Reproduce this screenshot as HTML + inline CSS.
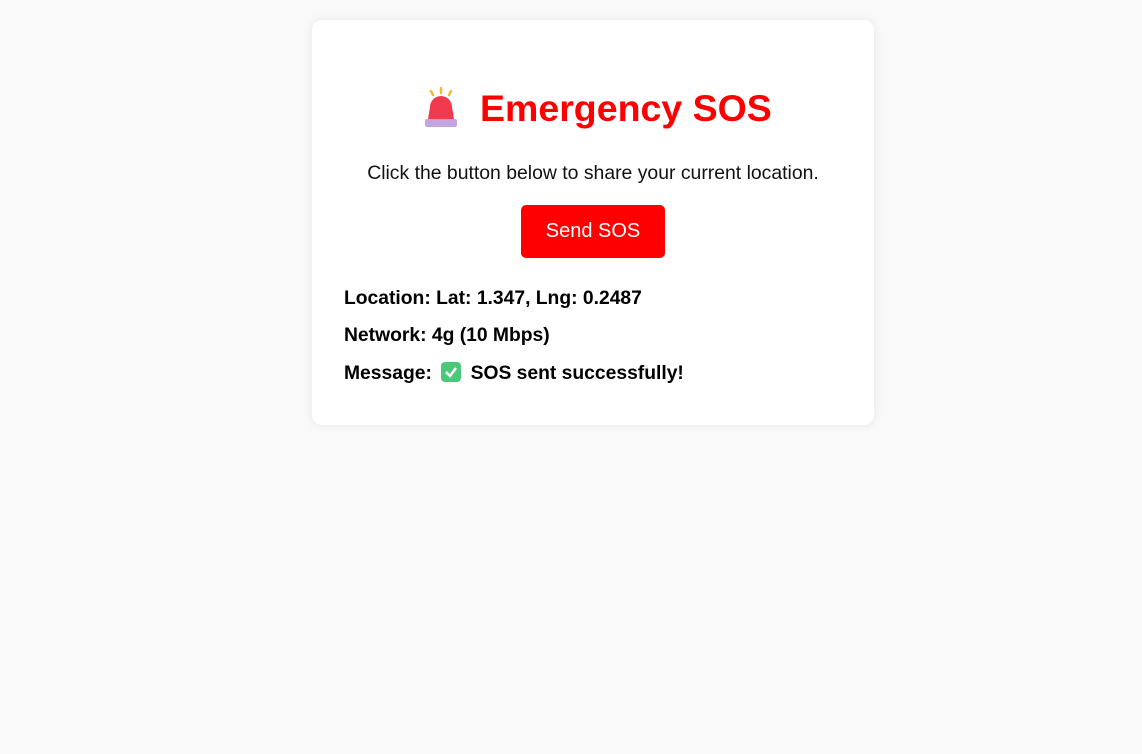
<!DOCTYPE html>
<html><head><meta charset="utf-8"><style>
body{margin:0;background:#f9f9f9;font-family:"Liberation Sans",sans-serif;width:1142px;height:754px;position:relative;overflow:hidden}
.card{position:absolute;left:312px;top:20px;width:562px;height:405px;background:#fff;border-radius:10px;box-shadow:0 0 10px rgba(0,0,0,0.08)}
.t{position:absolute;left:0;width:100%;text-align:center}
h1{position:absolute;left:168px;top:67px;margin:0;font-size:37.5px;color:#ff0000;font-weight:bold;white-space:nowrap}
.sub{top:142px;font-size:19.4px;color:#111}
.btn{position:absolute;left:209px;top:185px;width:144px;height:53px;background:#ff0000;border-radius:5px;color:#fff;font-size:20px;line-height:53px;text-align:center}
.l{position:absolute;left:32px;font-size:19.3px;font-weight:bold;color:#000;white-space:nowrap}
</style></head><body>
<div class="card">
<svg style="position:absolute;left:111px;top:67px" width="36" height="41" viewBox="0 0 36 41">
<g stroke="#f5b82e" stroke-width="2.5" stroke-linecap="round"><line x1="18" y1="1" x2="18" y2="6"/><line x1="8" y1="4" x2="10" y2="8"/><line x1="28" y1="4" x2="26" y2="8"/></g>
<path d="M5 32 L7 20 a11 11 0 0 1 22 0 L31 32 Z" fill="#f23a4f"/>
<rect x="2" y="32" width="32" height="8" rx="2" fill="#c3a6e0"/>
</svg>
<h1>Emergency SOS</h1>
<div class="t sub">Click the button below to share your current location.</div>
<div class="btn">Send SOS</div>
<div class="l" style="top:268px">Location: Lat: 1.347, Lng: 0.2487</div>
<div class="l" style="top:305px">Network: 4g (10 Mbps)</div>
<div class="l" style="top:342px">Message: <span style="display:inline-block;width:20px;height:20px;background:#4cc879;border-radius:4px;vertical-align:-3px;position:relative;margin:0 4px"><svg width="20" height="20" style="position:absolute;left:0;top:0"><path d="M5 10 L9 14 L15 6" stroke="#fff" stroke-width="2.5" fill="none"/></svg></span> SOS sent successfully!</div>
</div>
</body></html>
